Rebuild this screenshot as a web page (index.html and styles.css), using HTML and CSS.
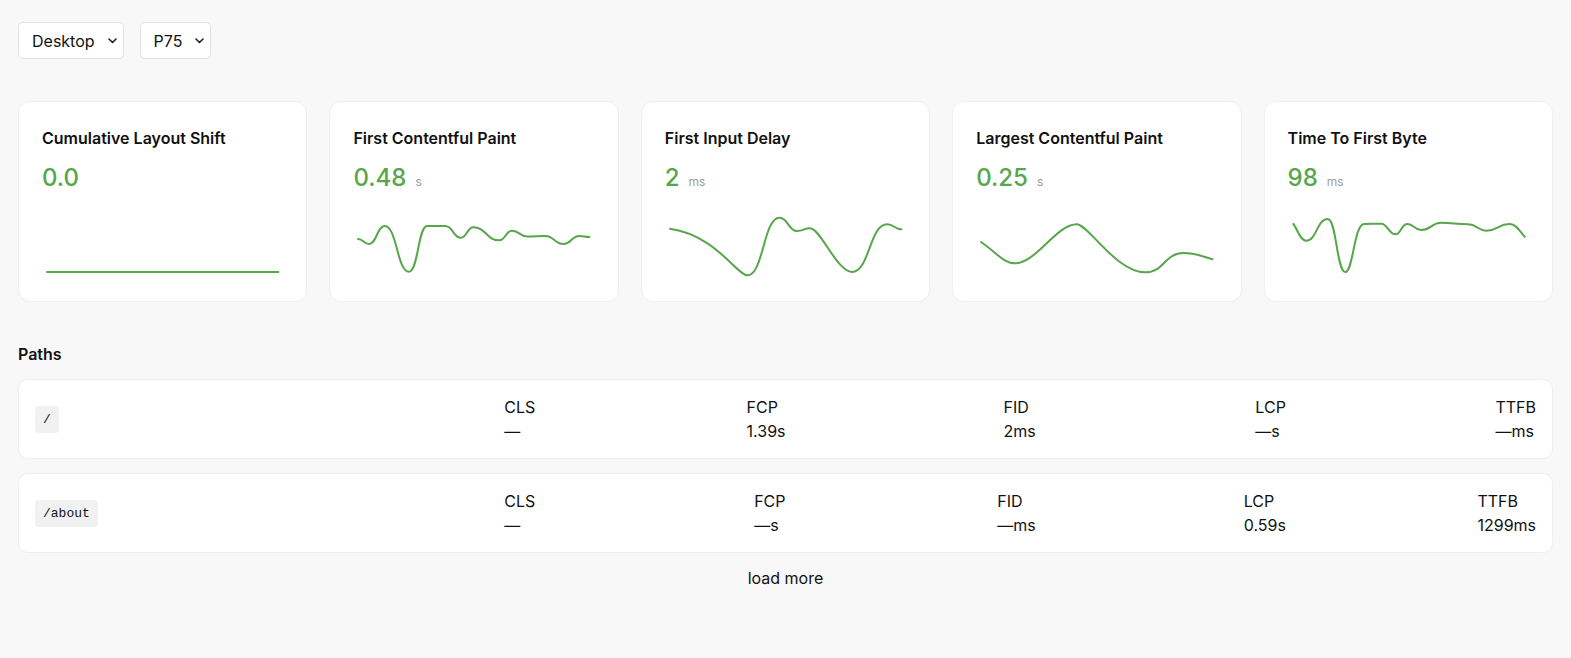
FILE: index.html
```html
<!DOCTYPE html>
<html lang="en">
<head>
<meta charset="utf-8">
<title>Web Vitals</title>
<link rel="stylesheet" href="styles.css">
</head>
<body>
<main class="page">
  <div class="filters">
    <div class="select"><span>Desktop</span><svg class="chev" width="9" height="6" viewBox="0 0 9 6"><path d="M1 1l3.5 3.5L8 1" fill="none" stroke="#222" stroke-width="1.6" stroke-linecap="round" stroke-linejoin="round"/></svg></div>
    <div class="select"><span>P75</span><svg class="chev" width="9" height="6" viewBox="0 0 9 6"><path d="M1 1l3.5 3.5L8 1" fill="none" stroke="#222" stroke-width="1.6" stroke-linecap="round" stroke-linejoin="round"/></svg></div>
  </div>

  <section class="cards">
    <div class="card">
      <div class="card-title">Cumulative Layout Shift</div>
      <div class="card-value"><span class="num">0.0</span></div>
      <svg class="spark" viewBox="0 0 241 64" preserveAspectRatio="none"><path d="M5,59 L236,59"/></svg>
    </div>
    <div class="card">
      <div class="card-title">First Contentful Paint</div>
      <div class="card-value"><span class="num">0.48</span><span class="unit">s</span></div>
      <svg class="spark" viewBox="0 0 241 64" preserveAspectRatio="none"><path d="M5,26 C10.5,26 10.5,31 16,31 C23.85,31 23.85,13 31.7,13 C43.85,13 43.85,58.7 56,58.7 C65,58.7 65,13 74,13 C83,13 83,13 92,13 C99.85,13 99.85,24.7 107.7,24.7 C113.85,24.7 113.85,14.3 120,14.3 C133,14.3 133,27.3 146,27.3 C152.35,27.3 152.35,17.7 158.7,17.7 C166.35,17.7 166.35,23.5 174,23.5 C183,23.5 183,23 192,23 C201,23 201,31 210,31 C218,31 218,23 226,23 C231,23 231,24 236,24"/></svg>
    </div>
    <div class="card">
      <div class="card-title">First Input Delay</div>
      <div class="card-value"><span class="num">2</span><span class="unit">ms</span></div>
      <svg class="spark" viewBox="0 0 241 64" preserveAspectRatio="none"><path d="M5,15.7 C50,22 72,62.3 82.3,62.3 C98.3,62.3 98.3,4.7 114.3,4.7 C123,4.7 123,18 131.7,18 C138.35,18 138.35,15.3 145,15.3 C155,15.3 172,59 186.7,59 C204.2,59 204.2,11.3 221.7,11.3 C228.85,11.3 228.85,16.3 236,16.3"/></svg>
    </div>
    <div class="card">
      <div class="card-title">Largest Contentful Paint</div>
      <div class="card-value"><span class="num">0.25</span><span class="unit">s</span></div>
      <svg class="spark" viewBox="0 0 241 64" preserveAspectRatio="none"><path d="M5,29 C20,39 27,50.3 39,50.3 C60,50.3 80,11.3 100.7,11.3 C112,11.3 140,59.3 169,59.3 C188,59.3 188,40 207.3,40 C220,40 226,43.5 236,46.3"/></svg>
    </div>
    <div class="card">
      <div class="card-title">Time To First Byte</div>
      <div class="card-value"><span class="num">98</span><span class="unit">ms</span></div>
      <svg class="spark" viewBox="0 0 241 64" preserveAspectRatio="none"><path d="M5.3,11 C9,15 12,27.7 18,27.7 C28.8,27.7 28.8,6 39.7,6 C48.5,6 48.5,59 57.3,59 C65,59 66,11 76,11 C84.5,11 84.5,10.7 93,10.7 C100,10.7 100,21.3 107.3,21.3 C113,21.3 113,11 119,11 C126,11 126,17 133,17 C143,17 143,9.7 153,9.7 C166,9.7 166,11.3 179.7,11.3 C189,11.3 189,17.7 198,17.7 C209.6,17.7 209.6,11 221.3,11 C228,11 232,19 236.3,23.7"/></svg>
    </div>
  </section>

  <section class="paths">
    <h2 class="paths-title">Paths</h2>
    <div class="path-row">
      <div class="path-cell"><code class="badge">/</code></div>
      <div class="metric"><div><div>CLS</div><div>—</div></div></div>
      <div class="metric"><div><div>FCP</div><div>1.39s</div></div></div>
      <div class="metric"><div><div>FID</div><div>2ms</div></div></div>
      <div class="metric"><div><div>LCP</div><div>—s</div></div></div>
      <div class="metric"><div><div>TTFB</div><div>—ms</div></div></div>
    </div>
    <div class="path-row">
      <div class="path-cell"><code class="badge">/about</code></div>
      <div class="metric"><div><div>CLS</div><div>—</div></div></div>
      <div class="metric"><div><div>FCP</div><div>—s</div></div></div>
      <div class="metric"><div><div>FID</div><div>—ms</div></div></div>
      <div class="metric"><div><div>LCP</div><div>0.59s</div></div></div>
      <div class="metric"><div><div>TTFB</div><div>1299ms</div></div></div>
    </div>
    <div class="more-wrap"><span class="more">load more</span></div>
  </section>
</main>
</body>
</html>
```

FILE: styles.css
```css
* { box-sizing: border-box; }

html, body {
  margin: 0;
  padding: 0;
  background: #f8f8f8;
  color: #111;
  font-family: Inter, "Noto Sans", "Liberation Sans", sans-serif;
  font-size: 16px;
  line-height: 24px;
}

.page {
  padding: 22px 18px 40px 18px;
}

.filters {
  display: flex;
  gap: 16px;
}

.select {
  display: inline-flex;
  align-items: center;
  gap: 13px;
  height: 37px;
  padding: 0 6px 0 13px;
  background: #fff;
  border: 1px solid #e3e3e3;
  border-radius: 5px;
  font-size: 16px;
  color: #111;
}

.chev { display: block; }

.cards {
  display: grid;
  grid-template-columns: repeat(5, 1fr);
  gap: 22px;
  margin-top: 42px;
}

.card {
  background: #fff;
  border: 1px solid #efefef;
  border-radius: 12px;
  height: 201px;
  padding: 24px 23px;
  display: flex;
  flex-direction: column;
}

.card-title {
  font-weight: 600;
  font-size: 16px;
  line-height: 24px;
  color: #111;
}

.card-value {
  margin-top: 12px;
  display: flex;
  align-items: baseline;
  line-height: 32px;
}

.num {
  font-size: 24px;
  font-weight: 500;
  color: #58a64b;
}

.unit {
  font-size: 12px;
  color: #9b9b9b;
  margin-left: 9px;
}

.spark {
  margin-top: auto;
  width: 100%;
  height: 64px;
  display: block;
  overflow: visible;
}

.spark path {
  fill: none;
  stroke: #58a64b;
  stroke-width: 2;
  stroke-linecap: round;
  stroke-linejoin: round;
  vector-effect: non-scaling-stroke;
}

.paths {
  margin-top: 40px;
}

.paths-title {
  margin: 0 0 13px 0;
  font-size: 16px;
  font-weight: 600;
  line-height: 24px;
}

.path-row {
  display: flex;
  align-items: center;
  background: #fff;
  border: 1px solid #efefef;
  border-radius: 10px;
  height: 80px;
  padding: 0 16px 0 16px;
  margin-bottom: 14px;
}

.path-cell {
  flex: 1 1 0;
  min-width: 0;
}

.badge {
  display: inline-block;
  background: #f1f1f1;
  border-radius: 4px;
  padding: 0 8px;
  height: 27px;
  line-height: 27px;
  font-family: "Liberation Mono", "DejaVu Sans Mono", monospace;
  font-size: 13px;
  color: #111;
}

.metric {
  flex: 1 1 0;
  min-width: 0;
  display: flex;
  justify-content: flex-end;
  font-size: 16px;
  line-height: 24px;
  color: #111;
}

.more-wrap {
  display: flex;
  justify-content: center;
  margin-top: -1px;
}

.more {
  font-size: 16px;
  line-height: 24px;
  color: #111;
}
```
